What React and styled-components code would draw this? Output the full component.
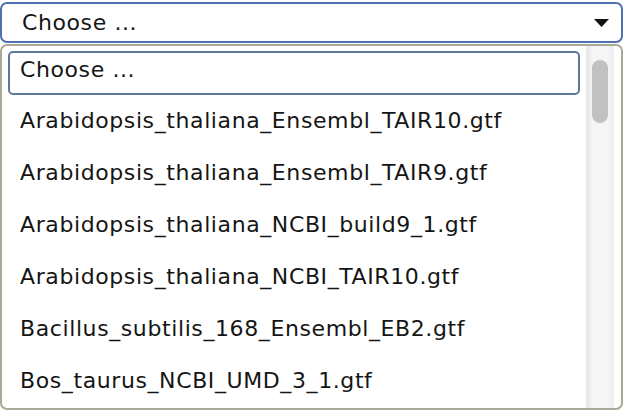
import React from 'react'
import styled, { createGlobalStyle } from 'styled-components'

const GlobalStyle = createGlobalStyle`
  html, body {
    margin: 0;
    padding: 0;
    background: #fff;
  }
  body {
    font-family: 'DejaVu Sans', Verdana, sans-serif;
    color: #151515;
  }
`

const Wrapper = styled.div`
  width: 624px;
  height: 410px;
  overflow: hidden;
  display: flex;
  flex-direction: column;
  gap: 1px;
  padding-top: 2px;
  box-sizing: border-box;
`

const Select = styled.div`
  flex-shrink: 0;
  height: 41px;
  width: 623px;
  box-sizing: border-box;
  border: 2px solid #4f71b4;
  border-radius: 7px;
  display: flex;
  align-items: center;
  justify-content: space-between;
  padding: 0 12px 0 20px;
  font-size: 22px;
  letter-spacing: 0.6px;
`

const Arrow = styled.svg`
  width: 15px;
  height: 8px;
  display: block;
`

const Panel = styled.div`
  flex: 1;
  min-height: 0;
  width: 623px;
  box-sizing: border-box;
  border: 2px solid #a9a899;
  border-radius: 7px;
  display: flex;
  padding: 5px 7px 0 6px;
  overflow: hidden;
`

const List = styled.div`
  flex: 1;
  display: flex;
  flex-direction: column;
`

const Option = styled.div`
  flex-shrink: 0;
  box-sizing: border-box;
  display: flex;
  align-items: center;
  padding: ${p => (p.$active ? '0 0 7px 10px' : '0 0 0 12px')};
  font-size: 22px;
  letter-spacing: 0.6px;
  border: ${p => (p.$active ? '2px solid #5d7998' : 'none')};
  border-radius: 5px;
  height: ${p => (p.$active ? '44px' : '52px')};
  margin-bottom: ${p => (p.$active ? '-1px' : '0')};
  white-space: nowrap;
`

const Track = styled.div`
  width: 28px;
  margin-left: 6px;
  margin-top: -5px;
  background: linear-gradient(to right, #e6e6e6, #f6f6f6 25%, #f6f6f6 75%, #ececec);
  display: flex;
  justify-content: center;
  padding-top: 14px;
`

const Thumb = styled.div`
  width: 16px;
  height: 63px;
  border-radius: 8px;
  background: #c1c1c1;
`

const files = [
  'Arabidopsis_thaliana_Ensembl_TAIR10.gtf',
  'Arabidopsis_thaliana_Ensembl_TAIR9.gtf',
  'Arabidopsis_thaliana_NCBI_build9_1.gtf',
  'Arabidopsis_thaliana_NCBI_TAIR10.gtf',
  'Bacillus_subtilis_168_Ensembl_EB2.gtf',
  'Bos_taurus_NCBI_UMD_3_1.gtf',
]

const App = () => (
  <>
    <GlobalStyle />
    <Wrapper>
      <Select>
        <span>Choose ...</span>
        <Arrow viewBox="0 0 15 8">
          <path d="M0 0 H15 L7.5 8 Z" fill="#111" />
        </Arrow>
      </Select>
      <Panel>
        <List>
          <Option $active>Choose ...</Option>
          {files.map(f => (
            <Option key={f}>{f}</Option>
          ))}
        </List>
        <Track>
          <Thumb />
        </Track>
      </Panel>
    </Wrapper>
  </>
)

export default App
